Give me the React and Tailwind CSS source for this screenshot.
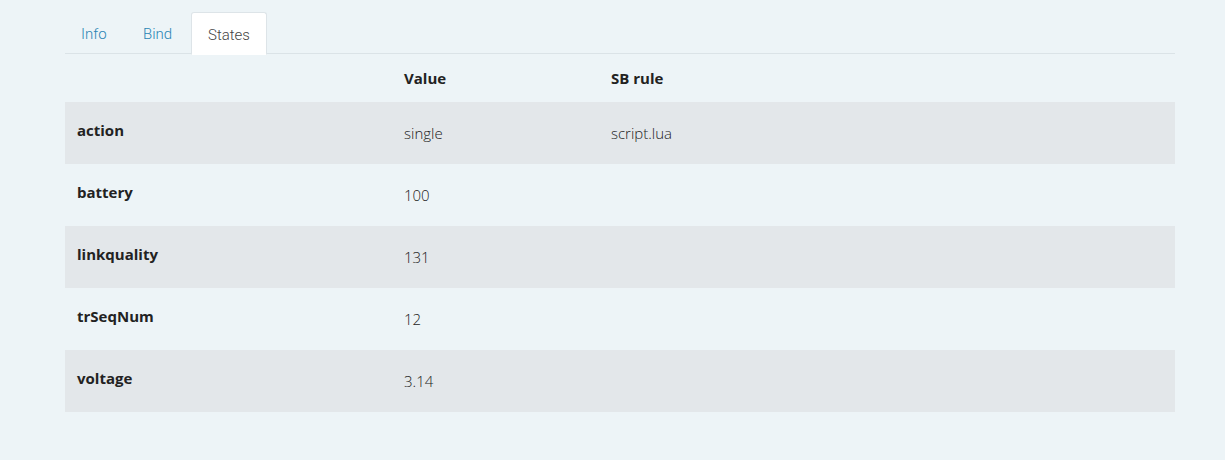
const rows = [
  { name: "action", value: "single", rule: "script.lua" },
  { name: "battery", value: "100", rule: "" },
  { name: "linkquality", value: "131", rule: "" },
  { name: "trSeqNum", value: "12", rule: "" },
  { name: "voltage", value: "3.14", rule: "" },
];

function App() {
  return (
    <div
      className="min-h-screen w-full bg-[#edf4f7] pt-3"
      style={{ fontFamily: '"Open Sans", "Noto Sans", sans-serif' }}
    >
      <div className="ml-[65px] w-[1110px]">
        {/* tabs */}
        <div
          className="flex border-b border-[#dbe3e7] h-[42px] text-[15px]"
          style={{ fontFamily: 'Roboto, "Open Sans", sans-serif' }}
        >
          <div className="w-[60px] px-4 pt-[11px] text-[#2a84b4] font-light">Info</div>
          <div className="ml-[2px] w-[64px] px-4 pt-[11px] text-[#2a84b4] font-light">Bind</div>
          <div className="w-[76px] px-4 pt-[11px] text-[#444] font-light bg-white border border-[#dde4e8] border-b-white rounded-t-[3px] h-[43px]">
            States
          </div>
        </div>

        <table className="w-full border-collapse text-[15px] text-[#222]">
          <thead>
            <tr className="h-[48px]">
              <th className="w-[327px]"></th>
              <th className="w-[207px] text-left pl-3 font-bold">Value</th>
              <th className="text-left pl-3 font-bold">SB rule</th>
            </tr>
          </thead>
          <tbody>
            {rows.map((r, i) => (
              <tr
                key={r.name}
                className={i % 2 === 0 ? "h-[62px] bg-[#e3e7ea]" : "h-[62px]"}
              >
                <td className="pl-3 font-bold align-top pt-[17px]">{r.name}</td>
                <td className="pl-3 font-light text-[#222] align-top pt-[20px]">{r.value}</td>
                <td className="pl-3 font-light text-[#222] align-top pt-[20px]">{r.rule}</td>
              </tr>
            ))}
          </tbody>
        </table>
      </div>
    </div>
  );
}

export default App;
